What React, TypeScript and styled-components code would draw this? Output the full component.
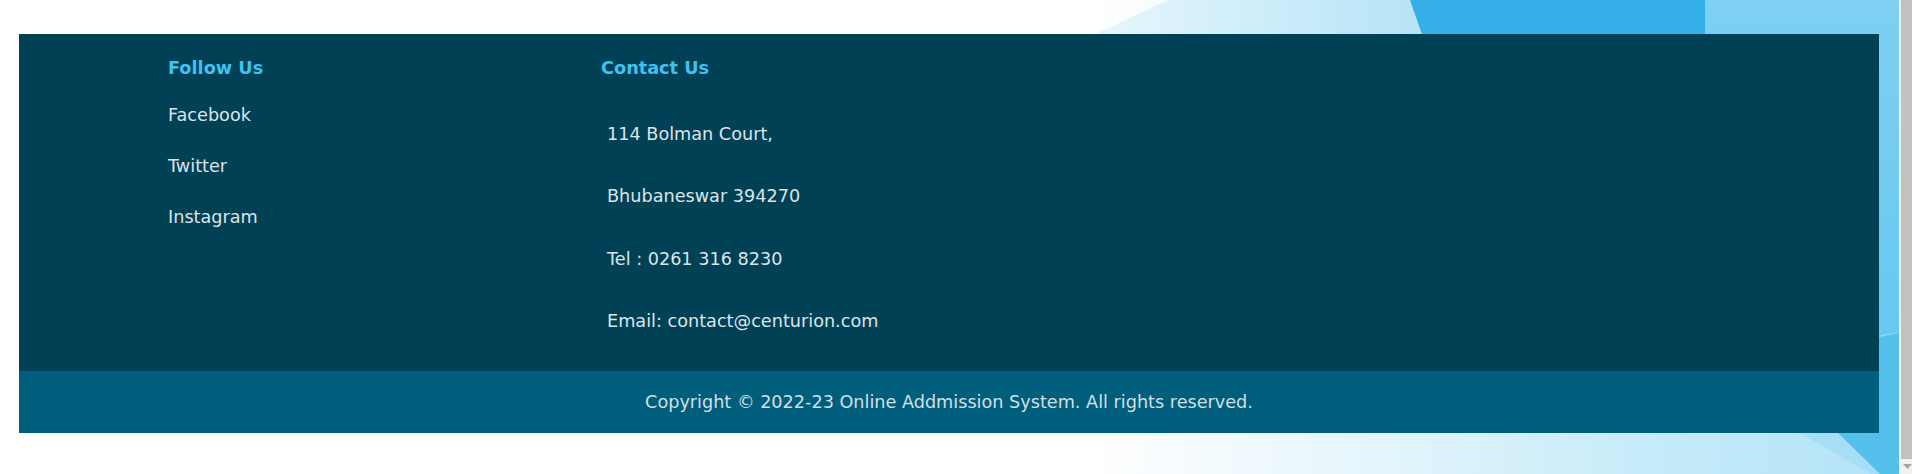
import React from "react";
import styled, { createGlobalStyle } from "styled-components";

const GlobalStyle = createGlobalStyle`
  html {
    margin: 0;
    padding: 0;
    background: #ffffff;
  }
  body {
    margin: 0;
    padding: 0;
    background: transparent;
    font-family: "DejaVu Sans", Verdana, sans-serif;
    overflow: hidden;
  }
`;

const Backdrop = styled.svg`
  position: fixed;
  inset: 0;
  width: 100%;
  height: 100%;
  z-index: 0;
  display: block;
`;

const FakeScrollbar = styled.div`
  position: fixed;
  top: 0;
  right: 0;
  bottom: 0;
  width: 13px;
  background: #f1f1f1;
  display: flex;
  flex-direction: column;
  z-index: 5;
`;

const ScrollThumb = styled.div`
  flex: 1;
  margin: 0 0 0 2px;
  background: #c1c1c1;
`;

const ScrollArrow = styled.div`
  height: 15px;
  display: flex;
  align-items: center;
  justify-content: center;
  padding-left: 3px;
`;

const Page = styled.div`
  position: relative;
  z-index: 1;
  padding: 34px 33px 41px 19px;
`;

const Footer = styled.footer`
  width: 1860px;
  background: #004156;
  color: #dbe4e8;
  font-size: 17.65px;
  line-height: 20px;
`;

const FooterMain = styled.div`
  display: grid;
  grid-template-columns: 433px 1fr;
  padding: 24px 0 40px 149px;
`;

const Column = styled.div`
  display: flex;
  flex-direction: column;
`;

const Heading = styled.h3`
  margin: 0;
  font-size: 17.7px;
  line-height: 20px;
  font-weight: bold;
  color: #3fc2f0;
`;

const List = styled.div<{ $top: number; $gap: number; $indent?: number }>`
  display: flex;
  flex-direction: column;
  margin-top: ${(p) => p.$top}px;
  gap: ${(p) => p.$gap}px;
  padding-left: ${(p) => p.$indent ?? 0}px;
`;

const FooterLink = styled.a`
  color: #dbe4e8;
  text-decoration: none;
  width: fit-content;
`;

const Line = styled.p`
  margin: 0;
  color: #dbe4e8;
`;

const BottomBar = styled.div`
  background: #005e7d;
  padding: 21px 0;
  text-align: center;
  color: #d3dfe5;
`;

const social = ["Facebook", "Twitter", "Instagram"];
const contact = [
  "114 Bolman Court,",
  "Bhubaneswar 394270",
  "Tel : 0261 316 8230",
  "Email: contact@centurion.com",
];

export default function App() {
  return (
    <>
      <GlobalStyle />
      <Backdrop viewBox="0 0 1912 474" preserveAspectRatio="none" aria-hidden="true">
        <defs>
          <linearGradient id="base" x1="0" y1="0" x2="1912" y2="0" gradientUnits="userSpaceOnUse">
            <stop offset="0" stopColor="#ffffff" />
            <stop offset="0.57" stopColor="#ffffff" />
            <stop offset="0.72" stopColor="#e4f5fc" />
            <stop offset="0.86" stopColor="#c6ebf9" />
            <stop offset="1" stopColor="#b2e3f7" />
          </linearGradient>
          <linearGradient id="topwedge" x1="1100" y1="0" x2="1420" y2="0" gradientUnits="userSpaceOnUse">
            <stop offset="0" stopColor="#e6f6fc" />
            <stop offset="1" stopColor="#b6e4f7" />
          </linearGradient>
          <linearGradient id="rightstrip" x1="0" y1="0" x2="0" y2="474" gradientUnits="userSpaceOnUse">
            <stop offset="0" stopColor="#7fd0f1" />
            <stop offset="1" stopColor="#5ec5ef" />
          </linearGradient>
        </defs>
        <rect x="0" y="0" width="1912" height="474" fill="url(#base)" />
        <polygon points="1168,0 1420,0 1440,60 1040,60" fill="url(#topwedge)" />
        <polygon points="1410,0 1705,0 1705,200 1480,200" fill="#33aee7" />
        <polygon points="1705,0 1912,0 1912,474 1880,474 1705,300" fill="url(#rightstrip)" />
        <polygon points="1740,360 1800,433 1870,474 1912,474 1912,330" fill="#a6def6" />
        <polygon points="1770,360 1838,433 1880,474 1912,474 1912,330" fill="#55c0ec" />
      </Backdrop>
      <FakeScrollbar aria-hidden="true">
        <ScrollThumb />
        <ScrollArrow>
          <svg width="9" height="5" viewBox="0 0 9 5">
            <polygon points="0,0 9,0 4.5,5" fill="#a3a3a3" />
          </svg>
        </ScrollArrow>
      </FakeScrollbar>
      <Page>
        <Footer>
          <FooterMain>
            <Column>
              <Heading>Follow Us</Heading>
              <List $top={27} $gap={31}>
                {social.map((s) => (
                  <FooterLink key={s} href="#">
                    {s}
                  </FooterLink>
                ))}
              </List>
            </Column>
            <Column>
              <Heading>Contact Us</Heading>
              <List $top={46} $gap={42.33} $indent={6}>
                {contact.map((c) => (
                  <Line key={c}>{c}</Line>
                ))}
              </List>
            </Column>
          </FooterMain>
          <BottomBar>Copyright © 2022-23 Online Addmission System. All rights reserved.</BottomBar>
        </Footer>
      </Page>
    </>
  );
}
